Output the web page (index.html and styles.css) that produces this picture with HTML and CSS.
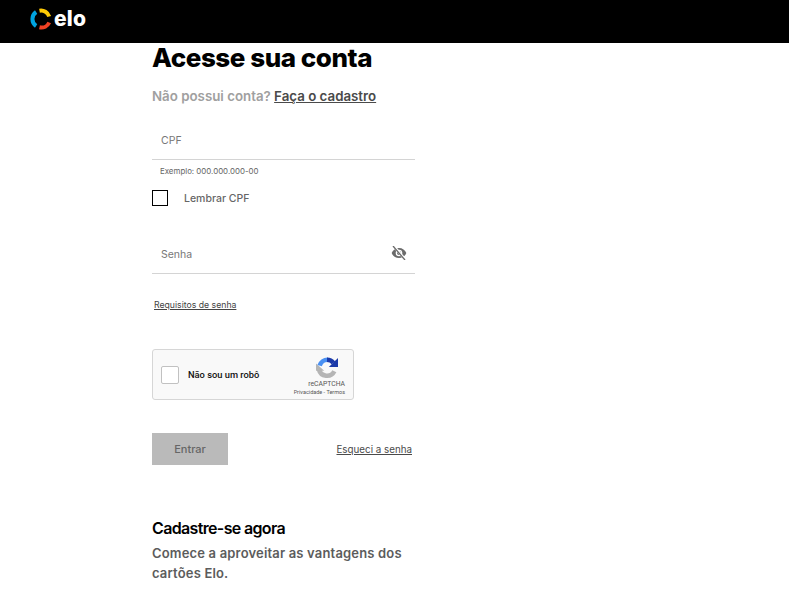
FILE: index.html
```html
<!DOCTYPE html>
<html lang="pt-BR">
  <head>
    <meta charset="UTF-8" />
    <meta name="viewport" content="width=device-width, initial-scale=1.0" />
    <title>Elo - Acesse sua conta</title>
    <link rel="stylesheet" href="styles.css">
  </head>
  <body>
    <header class="top-bar">
      <a class="logo" href="#">
        <svg class="logo-ring" width="23" height="22" viewBox="0 0 23 22">
          <path d="M6.100 4 A8.500 8.500 0 0 0 6.100 18" fill="none" stroke="#00a4e0" stroke-width="4" />
          <path d="M9.500 2.700 A8.500 8.500 0 0 1 19.200 8.500" fill="none" stroke="#ffcb05" stroke-width="4" />
          <path d="M19.200 14.500 A8.500 8.500 0 0 1 9.500 19.300" fill="none" stroke="#ef4123" stroke-width="4" />
        </svg>
        <span class="logo-text">elo</span>
      </a>
    </header>

    <main class="login">
      <h1>Acesse sua conta</h1>
      <p class="signup-line">Não possui conta? <a href="#">Faça o cadastro</a></p>

      <div class="field field-cpf">
        <span class="field-label">CPF</span>
      </div>
      <p class="hint">Exemplo: 000.000.000-00</p>

      <label class="remember">
        <span class="remember-box"></span>
        <span>Lembrar CPF</span>
      </label>

      <div class="field field-password">
        <span class="field-label">Senha</span>
        <svg class="eye" width="16" height="14" viewBox="0 0 24 21">
          <path fill="#6b6b6b" d="M12 3C7 3 2.700 6.100 1 10.500 2.700 14.900 7 18 12 18s9.300-3.100 11-7.500C21.300 6.100 17 3 12 3zm0 12.500a5 5 0 1 1 0-10 5 5 0 0 1 0 10zm0-8a3 3 0 1 0 0 6 3 3 0 0 0 0-6z" />
          <path stroke="#fff" stroke-width="4" d="M4 0 21 20" />
          <path stroke="#6b6b6b" stroke-width="2" d="M3 0 21 21" />
        </svg>
      </div>

      <a class="requirements" href="#">Requisitos de senha</a>

      <div class="captcha">
        <span class="captcha-box"></span>
        <span class="captcha-text">Não sou um robô</span>
        <div class="captcha-brand">
          <svg class="captcha-logo" width="22" height="22" viewBox="0 0 24 24">
            <path d="M20 15.500 A9 9 0 0 1 3.200 13.500" fill="none" stroke="#b5b5b5" stroke-width="5" />
            <path fill="#b5b5b5" d="M0 7 L9 15 L0 15 Z" />
            <path d="M4 9.500 A9 9 0 0 1 13 3" fill="none" stroke="#4a90f2" stroke-width="5" />
            <path d="M12 3 A9 9 0 0 1 19 6.500" fill="none" stroke="#1c3aa9" stroke-width="5" />
            <path fill="#1c3aa9" d="M24 1 V11 H14 Z" />
          </svg>
          <span class="captcha-name">reCAPTCHA</span>
          <span class="captcha-links">Privacidade - Termos</span>
        </div>
      </div>

      <div class="actions">
        <button class="btn-enter" disabled>Entrar</button>
        <a class="forgot" href="#">Esqueci a senha</a>
      </div>

      <h2>Cadastre-se agora</h2>
      <p class="signup-text">Comece a aproveitar as vantagens dos cartões Elo.</p>
    </main>
  </body>
</html>
```

FILE: styles.css
```css
html,
body {
  height: 100%;
}

body {
  margin: 0;
  overflow: hidden;
  font-family: Inter, "Liberation Sans", Arial, sans-serif;
  background-color: #fff;
  color: #333;
}

a {
  color: inherit;
}

.top-bar {
  height: 43px;
  background-color: #000;
  padding-left: 30px;
  display: flex;
  align-items: center;
  box-sizing: border-box;
}

.logo {
  display: flex;
  align-items: center;
  gap: 1px;
  text-decoration: none;
  margin-top: -5px;
}

.logo-text {
  color: #fff;
  font-size: 21px;
  font-weight: 800;
  letter-spacing: 0.2px;
  line-height: 22px;
}

.login {
  width: 263px;
  margin-left: 152px;
}

h1 {
  font-size: 26px;
  line-height: 30px;
  font-weight: 800;
  letter-spacing: -0.45px;
  color: #000;
  margin: 0;
}

.signup-line {
  margin: 14px 0 0;
  font-size: 13.300px;
  line-height: 18px;
  font-weight: 600;
  color: #a0a0a0;
}

.signup-line a {
  color: #4a4a4a;
}

.field {
  display: flex;
  align-items: center;
  justify-content: space-between;
  box-sizing: content-box;
  height: 38px;
  padding: 5px 8px 0 9px;
  border-bottom: 1px solid #d4d4d4;
}

.field-cpf {
  margin-top: 11px;
}

.field-password {
  margin-top: 24px;
}

.field-label {
  font-size: 10.500px;
  color: #777;
}

.eye {
  margin-top: -3px;
}

.hint {
  margin: 6px 0 0 8px;
  font-size: 7.900px;
  line-height: 11px;
  color: #666;
}

.remember {
  display: flex;
  align-items: center;
  gap: 16px;
  margin-top: 13px;
  font-size: 10.500px;
  font-weight: 500;
  color: #666;
}

.remember-box {
  width: 14px;
  height: 14px;
  border: 1px solid #000;
}

.requirements {
  display: block;
  margin: 25px 0 0 2px;
  font-size: 8.700px;
  line-height: 12px;
  color: #444;
}

.captcha {
  display: flex;
  align-items: center;
  box-sizing: border-box;
  width: 202px;
  height: 51px;
  margin-top: 38px;
  padding: 0 8px;
  background-color: #f9f9f9;
  border: 1px solid #d6d6d6;
  border-radius: 3px;
  font-family: Roboto, "Liberation Sans", Arial, sans-serif;
}

.captcha-box {
  width: 16px;
  height: 16px;
  background-color: #fff;
  border: 1px solid #c1c1c1;
  border-radius: 2px;
}

.captcha-text {
  margin-left: 9px;
  font-size: 9.300px;
  font-weight: 500;
  color: #111;
}

.captcha-brand {
  display: flex;
  flex-direction: column;
  align-items: flex-end;
  margin-left: auto;
  padding-top: 4px;
}

.captcha-logo {
  margin: 0 7px 1px 0;
}

.captcha-name {
  font-size: 6.800px;
  line-height: 9px;
  color: #555;
}

.captcha-links {
  font-size: 5.500px;
  line-height: 7px;
  color: #555;
}

.actions {
  display: flex;
  align-items: center;
  justify-content: space-between;
  margin-top: 33px;
  padding-right: 3px;
}

.btn-enter {
  width: 76px;
  height: 32px;
  border: none;
  background-color: #bababa;
  color: #666;
  font-family: inherit;
  font-size: 11px;
  font-weight: 500;
}

.forgot {
  font-size: 9.800px;
  color: #4a4a4a;
}

h2 {
  margin: 53px 0 0;
  font-size: 16px;
  line-height: 20px;
  font-weight: 600;
  letter-spacing: -0.65px;
  color: #000;
}

.signup-text {
  margin: 5px 0 0;
  font-size: 13px;
  line-height: 20px;
  font-weight: 600;
  letter-spacing: 0.17px;
  color: #5c5c5c;
}
```
